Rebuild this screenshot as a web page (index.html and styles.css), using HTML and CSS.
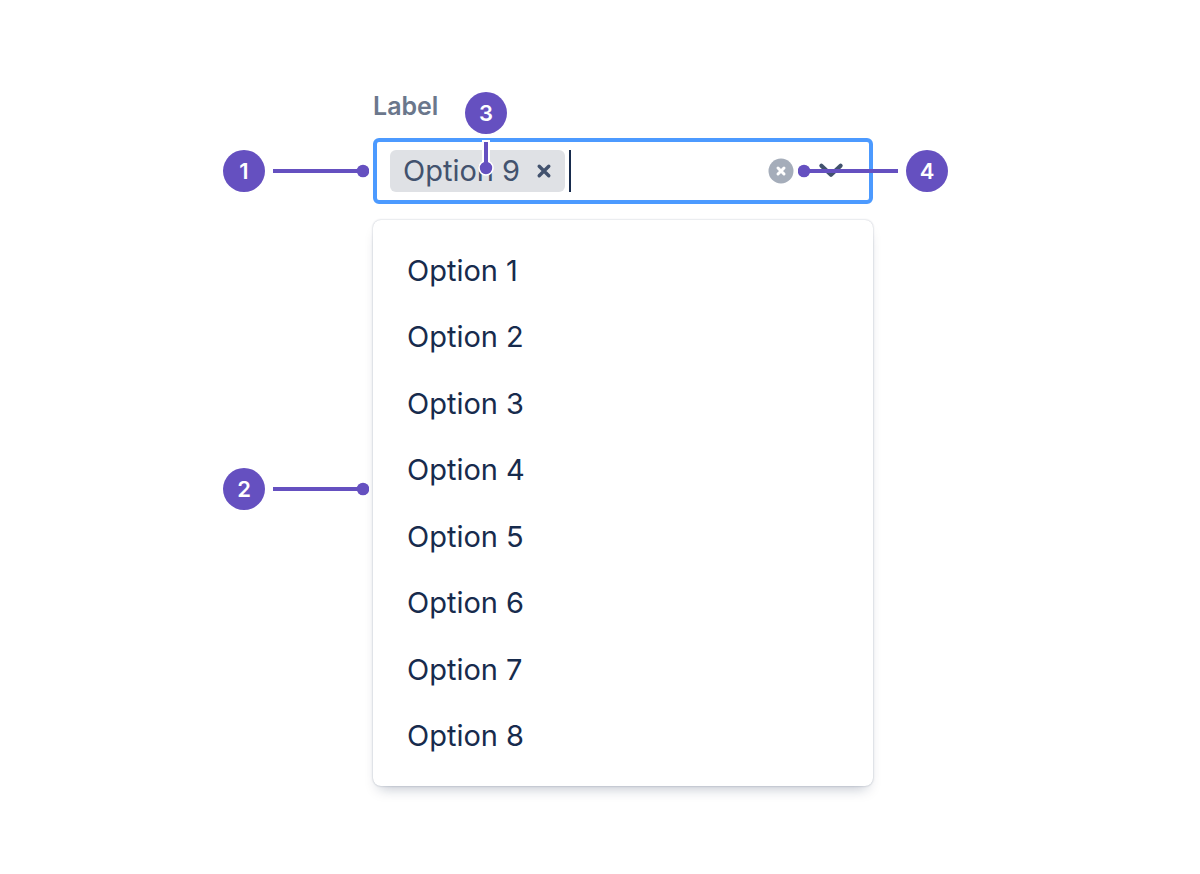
FILE: index.html
```html
<!DOCTYPE html>
<html lang="en">
<head>
<meta charset="utf-8">
<meta name="viewport" content="width=device-width, initial-scale=1">
<title>Multi-select anatomy</title>
<link rel="stylesheet" href="styles.css">
</head>
<body>
<main class="page">
  <div class="picker">
    <label class="label" for="options">Label</label>
    <div class="control">
      <span class="tag">Option 9
        <button class="icon-button" type="button" aria-label="Remove Option 9">
          <svg width="16" height="16" viewBox="0 0 16 16"><path d="M3.2 3.2L12.8 12.8M12.8 3.2L3.2 12.8" stroke="#42526e" stroke-width="3.4" stroke-linecap="round"/></svg>
        </button>
      </span>
      <span class="caret"></span>
      <input class="input" id="options" type="text" autocomplete="off">
      <button class="icon-button" type="button" aria-label="Clear all">
        <svg width="26" height="26" viewBox="0 0 26 26"><circle cx="13" cy="13" r="12.5" fill="#a5adba"/><path d="M10 10L16 16M16 10L10 16" stroke="#fff" stroke-width="3" stroke-linecap="round"/></svg>
      </button>
      <button class="icon-button" type="button" aria-label="Open menu">
        <svg width="26" height="26" viewBox="0 0 26 26"><path d="M3.4 7.7L13 16.7L22.6 7.7" fill="none" stroke="#42526e" stroke-width="4.2" stroke-linecap="round" stroke-linejoin="round"/></svg>
      </button>
    </div>
    <ul class="menu">
      <li class="option">Option 1</li>
      <li class="option">Option 2</li>
      <li class="option">Option 3</li>
      <li class="option">Option 4</li>
      <li class="option">Option 5</li>
      <li class="option">Option 6</li>
      <li class="option">Option 7</li>
      <li class="option">Option 8</li>
    </ul>
    <div class="callout callout-control">
      <span class="badge">1</span>
      <svg width="96" height="14" viewBox="0 0 96 14" fill="#6550c0"><path d="M0 5H90V9H0Z"/><circle cx="90" cy="7" r="6.3"/></svg>
    </div>
    <div class="callout callout-menu">
      <span class="badge">2</span>
      <svg width="96" height="14" viewBox="0 0 96 14" fill="#6550c0"><path d="M0 5H90V9H0Z"/><circle cx="90" cy="7" r="6.3"/></svg>
    </div>
    <div class="callout callout-tag">
      <span class="badge">3</span>
      <svg width="18" height="36" viewBox="0 0 18 36"><g fill="#6550c0" stroke="#fff"><path d="M7 2H11V26H7Z" stroke-width="4"/><circle cx="9" cy="28" r="7" stroke-width="1.6"/></g><path d="M7 2H11V26H7Z" fill="#6550c0"/></svg>
    </div>
    <div class="callout callout-clear">
      <svg width="100" height="14" viewBox="0 0 100 14" fill="#6550c0"><path d="M6 5H100V9H6Z"/><circle cx="6" cy="7" r="6.3"/></svg>
      <span class="badge">4</span>
    </div>
  </div>
</main>
</body>
</html>
```
FILE: styles.css
```css
* { box-sizing: border-box; }

body {
  margin: 0;
  background: #fff;
  color: #172b4d;
  font-family: Inter, "Liberation Sans", sans-serif;
  font-size: 29px;
}

svg { display: block; flex: none; }

.page {
  display: flex;
  justify-content: center;
  padding: 90px 0 88px 46px;
}

.picker {
  position: relative;
  width: 100%;
  max-width: 500px;
}

.label {
  display: block;
  margin-bottom: 16px;
  color: #6b778c;
  font-size: 25px;
  font-weight: 600;
  line-height: 32px;
}

.control {
  display: flex;
  align-items: center;
  padding: 8px 25px 8px 13px;
  border: 4px solid #4c9aff;
  border-radius: 6px;
}

.tag {
  display: flex;
  align-items: center;
  gap: 16px;
  padding: 0 13px;
  border-radius: 6px;
  background: #dfe1e5;
  color: #42526e;
  line-height: 42px;
}

.caret {
  width: 2px;
  height: 42px;
  margin-left: 4px;
  background: #172b4d;
}

.input {
  flex: 1;
  min-width: 0;
  padding: 0;
  border: 0;
  outline: 0;
  background: none;
  font: inherit;
}

.icon-button {
  padding: 0;
  border: 0;
  background: none;
}

.icon-button + .icon-button { margin-left: 24px; }

.menu {
  display: flex;
  flex-direction: column;
  min-height: 566px;
  margin: 16px 0 0;
  padding: 17px 0;
  border-radius: 8px;
  background: #fff;
  box-shadow: 0 0 2px rgba(9, 30, 66, 0.31), 0 8px 14px -6px rgba(9, 30, 66, 0.28);
  list-style: none;
}

.option {
  display: flex;
  flex: 1;
  align-items: center;
  padding: 0 34px;
}

.callout {
  position: absolute;
  display: flex;
  align-items: center;
  gap: 8px;
}

.callout-control { top: 60px; right: 504px; }
.callout-menu { top: 378px; right: 504px; }
.callout-tag { top: 2px; left: 92px; flex-direction: column; gap: 6px; }
.callout-clear { top: 60px; left: 425px; }

.badge {
  width: 42px;
  border-radius: 50%;
  background: #6550c0;
  color: #fff;
  font-size: 22px;
  font-weight: 600;
  line-height: 42px;
  text-align: center;
}
```
